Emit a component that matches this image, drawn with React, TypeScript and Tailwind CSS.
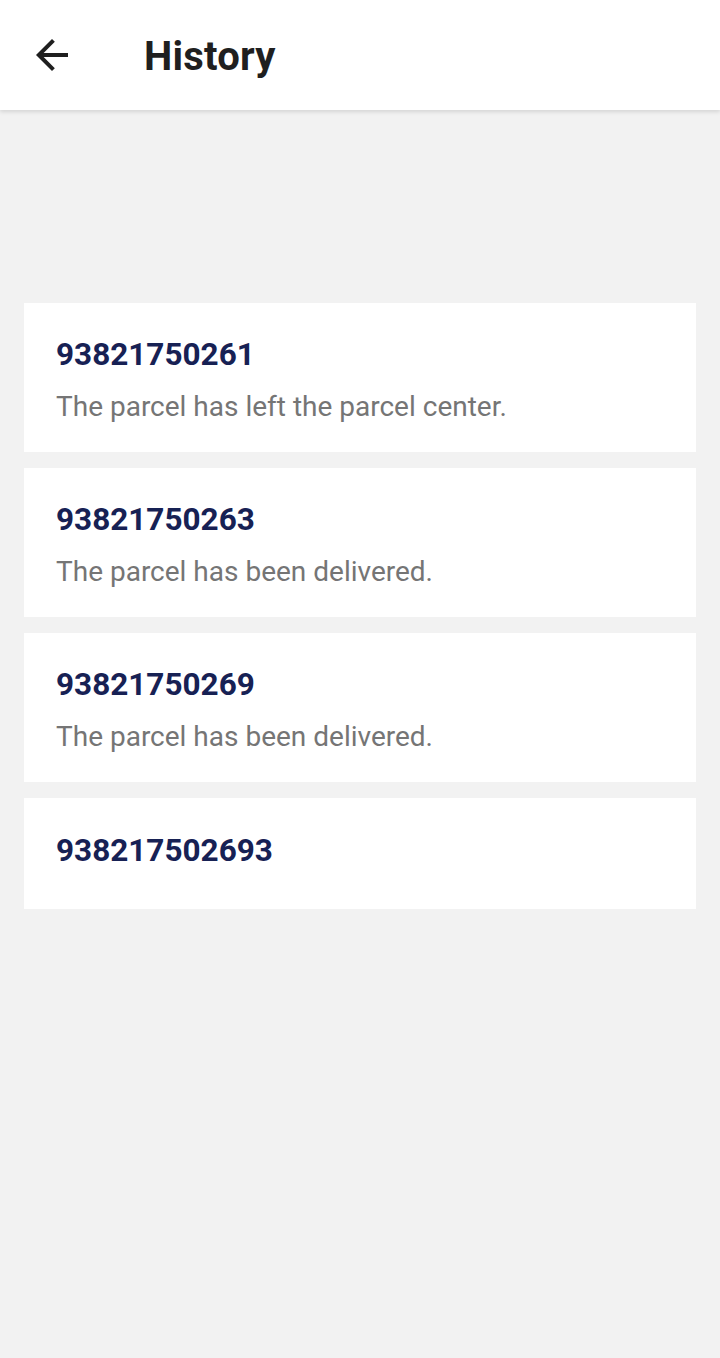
const items = [
  { id: "93821750261", status: "The parcel has left the parcel center." },
  { id: "93821750263", status: "The parcel has been delivered." },
  { id: "93821750269", status: "The parcel has been delivered." },
  { id: "938217502693", status: "" },
];

const BackIcon = () => (
  <svg width="48" height="48" viewBox="0 0 24 24" fill="#1f1f1f">
    <path d="M20 11H7.83l5.59-5.59L12 4l-8 8 8 8 1.41-1.41L7.83 13H20v-2z" />
  </svg>
);

export default function App() {
  return (
    <div
      className="min-h-[1358px] bg-[#f2f2f2]"
      style={{ fontFamily: "Roboto, 'Noto Sans', sans-serif" }}
    >
      <header className="h-[110px] bg-white flex items-center shadow-[0_2px_4px_rgba(0,0,0,0.12)] relative">
        <div className="ml-[28px] w-[48px] h-[48px] flex items-center justify-center">
          <BackIcon />
        </div>
        <h1 className="ml-[68px] mt-[4px] text-[40px] font-bold text-[#1f1f1f] leading-none tracking-[0.2px]">
          History
        </h1>
      </header>

      <div className="px-6 pt-[193px] flex flex-col gap-4">
        {items.map((item) => (
          <div
            key={item.id}
            className={
              item.status
                ? "bg-white px-8 pt-[33px] pb-[29px]"
                : "bg-white px-8 pt-[34px] pb-[39px]"
            }
          >
            <div className="text-[31.5px] leading-[38px] font-bold text-[#172154]">
              {item.id}
            </div>
            {item.status && (
              <div className="mt-4 text-[28px] leading-[33px] text-[#757575]">
                {item.status}
              </div>
            )}
          </div>
        ))}
      </div>
    </div>
  );
}
